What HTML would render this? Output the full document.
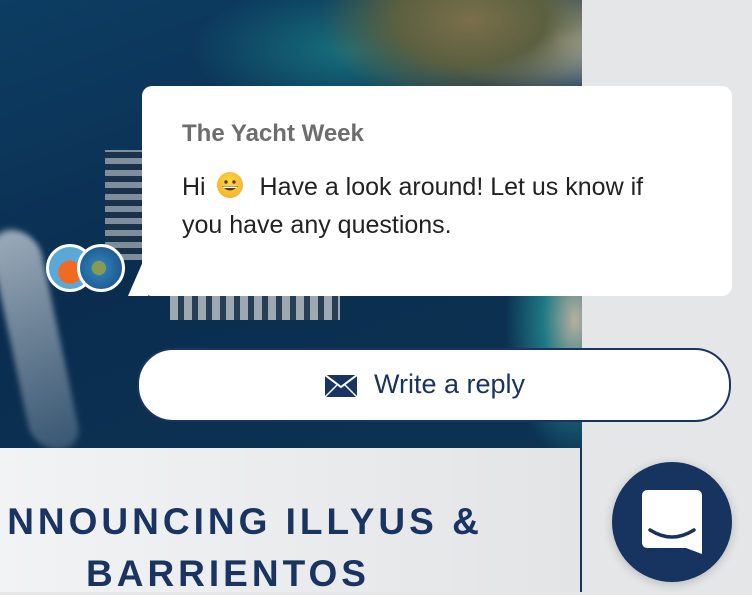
<!DOCTYPE html>
<html><head><style>
body{margin:0;width:752px;height:592px;overflow:hidden;background:#e5e6e8;font-family:"Liberation Sans",sans-serif;position:relative}
.photo{position:absolute;left:0;top:0;width:582px;height:448px;background:
radial-gradient(ellipse 150px 90px at 470px 20px,#7a6f4a 0%,#5b6040 50%,rgba(40,90,90,0) 100%),
radial-gradient(ellipse 120px 60px at 560px 40px,#d8d0c0 0%,rgba(200,190,170,0) 100%),
radial-gradient(ellipse 70px 140px at 575px 320px,#b9b09e 0%,#1f7a85 45%,rgba(20,60,90,0) 100%),
radial-gradient(ellipse 160px 70px at 350px 50px,#17707c 0%,rgba(20,70,110,0) 100%),
linear-gradient(160deg,#0d3d63 0%,#0a2d4f 50%,#0c3352 100%)}
.wake{position:absolute;left:10px;top:230px;width:50px;height:220px;background:linear-gradient(160deg,rgba(255,255,255,.6),rgba(220,230,240,.2));transform:skewX(12deg);filter:blur(3px);border-radius:30px}
.boats{position:absolute;left:170px;top:290px;width:170px;height:30px;background:repeating-linear-gradient(90deg,#ddd 0 8px,#345 8px 14px);opacity:.7}
.boats2{position:absolute;left:105px;top:150px;width:40px;height:110px;background:repeating-linear-gradient(0deg,#ccc 0 6px,#234 6px 12px);opacity:.6}
.bottom{position:absolute;left:0;top:448px;width:580px;height:144px;background:linear-gradient(90deg,#f2f3f4,#e3e4e6);border-right:2px solid #1a3461}
.h{position:absolute;left:0;width:580px;text-align:center;color:#1a3461;font-size:37px;letter-spacing:4px;font-weight:bold}
.card{position:absolute;left:142px;top:86px;width:590px;height:210px;background:#fff;border-radius:10px}
.tail{position:absolute;left:128px;top:250px;width:0;height:0;border-left:20px solid transparent;border-bottom:46px solid #fff}
.name{position:absolute;left:182px;top:120px;font-size:24px;color:#6d6d6d;font-weight:bold}
.msg{position:absolute;left:182px;top:168px;font-size:25px;line-height:38px;color:#222;width:505px}
.emoji{display:inline-block;width:26px;height:26px;border-radius:50%;background:radial-gradient(circle at 50% 40%,#ffd84a,#f0a820);vertical-align:-3px;position:relative;margin:0 10px 0 4px}
.av{position:absolute;top:244px;width:42px;height:42px;border-radius:50%;border:3px solid #fff}
.btn{position:absolute;left:137px;top:348px;width:590px;height:70px;background:#fff;border:2px solid #1a3461;border-radius:36px;color:#1a3461;font-size:27px}
.launch{position:absolute;left:612px;top:462px;width:120px;height:120px;border-radius:50%;background:#17335f;box-shadow:0 2px 10px rgba(0,0,0,.2)}
</style></head><body>
<div class="photo"><div class="wake"></div><div class="boats2"></div><div class="boats"></div></div>
<div class="bottom">
<div class="h" style="top:53px;left:-45px">NNOUNCING ILLYUS &amp;</div>
<div class="h" style="top:105px;left:-62px">BARRIENTOS</div>
</div>
<div class="tail"></div>
<div class="card"></div>
<div class="name">The Yacht Week</div>
<div class="msg">Hi <span class="emoji"><svg width="26" height="26" style="position:absolute;left:0;top:0"><circle cx="9" cy="10" r="1.7" fill="#5a3a10"/><circle cx="17" cy="10" r="1.7" fill="#5a3a10"/><path d="M5 14 Q13 23 21 14 Z" fill="#5a3a10"/><path d="M6 14.5 H20 V16 H6Z" fill="#fff"/></svg></span> Have a look around! Let us know if you have any questions.</div>
<div class="av" style="left:46px;background:radial-gradient(circle at 50% 60%,#f26a20 0 35%,#5aa8d8 36%)"></div>
<div class="av" style="left:77px;background:radial-gradient(circle at 45% 50%,#8a9a50 0 22%,#2a7ab0 24%,#1a4a80)"></div>
<div class="btn"><svg style="position:absolute;left:186px;top:25px" width="32" height="22" viewBox="0 0 32 22"><rect width="32" height="22" fill="#1a3461"/><path d="M0 0 L16 12 L32 0" fill="none" stroke="#fff" stroke-width="2"/><path d="M0 22 L12 10 M32 22 L20 10" stroke="#fff" stroke-width="1.5"/></svg><span style="position:absolute;left:235px;top:19px">Write a reply</span></div>
<div class="launch"><svg style="position:absolute;left:30px;top:28px" width="60" height="66" viewBox="0 0 60 66"><path d="M6 0 H54 Q60 0 60 6 V64 L44 58 H6 Q0 58 0 52 V6 Q0 0 6 0Z" fill="#fff"/><path d="M8 40 Q30 54 52 40" fill="none" stroke="#17335f" stroke-width="3.5" stroke-linecap="round"/></svg></div>
</body></html>
